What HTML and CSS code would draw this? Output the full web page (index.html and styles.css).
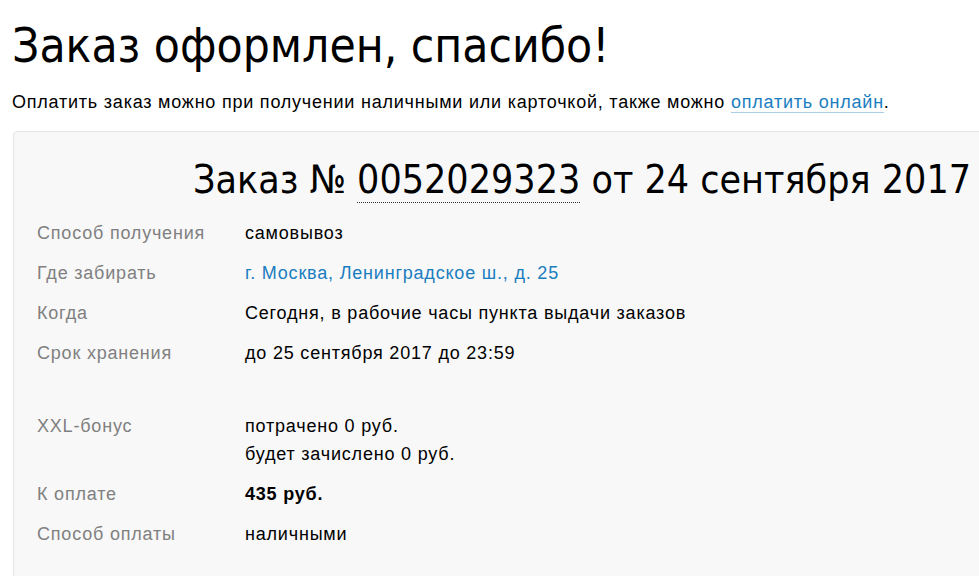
FILE: index.html
```html
<!DOCTYPE html>
<html lang="ru">
<head>
<meta charset="utf-8">
<title>Заказ оформлен</title>
<link rel="stylesheet" href="styles.css">
</head>
<body>
<div class="page">
  <h1 class="page-title">Заказ оформлен, спасибо!</h1>
  <p class="lead">Оплатить заказ можно при получении наличными или карточкой, также можно <a class="lead-link" href="#">оплатить онлайн</a>.</p>
  <div class="order">
    <h2 class="order-title">Заказ № <span class="order-num">0052029323</span> от 24 сентября 2017</h2>
    <div class="rows">
      <div class="row"><div class="label">Способ получения</div><div class="value">самовывоз</div></div>
      <div class="row"><div class="label">Где забирать</div><div class="value"><a class="addr" href="#">г. Москва, Ленинградское ш., д. 25</a></div></div>
      <div class="row"><div class="label">Когда</div><div class="value">Сегодня, в рабочие часы пункта выдачи заказов</div></div>
      <div class="row"><div class="label">Срок хранения</div><div class="value">до 25 сентября 2017 до 23:59</div></div>
      <div class="row row-gap"><div class="label">XXL-бонус</div><div class="value">потрачено 0 руб.<br>будет зачислено 0 руб.</div></div>
      <div class="row"><div class="label">К оплате</div><div class="value strong">435 руб.</div></div>
      <div class="row"><div class="label">Способ оплаты</div><div class="value">наличными</div></div>
    </div>
  </div>
</div>
</body>
</html>
```
FILE: styles.css
```css
html, body {
  margin: 0;
  padding: 0;
  overflow: hidden;
  background: #fff;
}
body {
  font-family: "Liberation Sans", Arial, sans-serif;
  color: #000;
}
.page {
  padding-left: 12px;
}
.page-title {
  font-family: "DejaVu Sans Condensed", "DejaVu Sans", sans-serif;
  font-weight: normal;
  font-size: 47.5px;
  line-height: 56px;
  margin: 0;
  padding-top: 18px;
  color: #000;
}
.lead {
  font-size: 18px;
  letter-spacing: 0.78px;
  line-height: 24px;
  margin: 16px 0 0 0;
}
.lead-link {
  color: #1a7dbf;
  text-decoration: none;
  border-bottom: 1px solid #a9cfe8;
}
.order {
  margin-top: 17px;
  margin-left: 1px;
  width: 1138px;
  box-sizing: border-box;
  background: #f8f8f8;
  border: 1px solid #e5e5e5;
  border-radius: 4px;
  padding: 24px 0 30px 0;
}
.order-title {
  font-family: "DejaVu Sans Condensed", "DejaVu Sans", sans-serif;
  font-weight: normal;
  font-size: 39px;
  line-height: 48px;
  margin: 0;
  text-align: center;
  color: #000;
}
.order-num {
  border-bottom: 1px dotted #333;
}
.rows {
  padding: 9px 0 0 23px;
}
.row {
  display: flex;
  font-size: 18px;
  letter-spacing: 0.8px;
  line-height: 28px;
  padding: 6px 0;
}
.row-gap {
  margin-top: 33px;
}
.label {
  width: 208px;
  flex: none;
  color: #808080;
}
.value {
  color: #000;
}
.strong {
  font-weight: bold;
}
.addr {
  color: #1a7dbf;
  text-decoration: none;
}
```
